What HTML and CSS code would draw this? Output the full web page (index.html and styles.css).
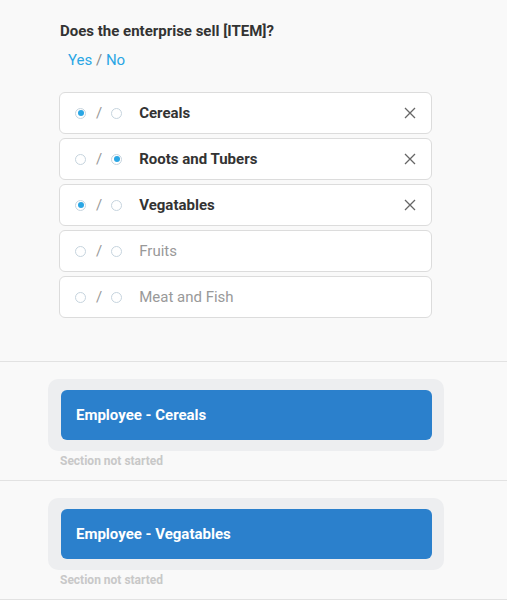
FILE: index.html
```html
<!DOCTYPE html>
<html>
<head>
<meta charset="utf-8">
<link rel="stylesheet" href="styles.css">
</head>
<body>
<div class="question">
  <div class="q-title">Does the enterprise sell [ITEM]?</div>
  <div class="q-legend"><span>Yes</span> / <span>No</span></div>
  <div class="rows">
    <div class="row">
      <span class="radio on"></span><span class="slash">/</span><span class="radio"></span>
      <span class="label sel">Cereals</span>
      <svg class="x" viewBox="0 0 12 12" width="12" height="12"><path d="M1 1L11 11M11 1L1 11" stroke="#666" stroke-width="1.3" fill="none"/></svg>
    </div>
    <div class="row">
      <span class="radio"></span><span class="slash">/</span><span class="radio on"></span>
      <span class="label sel">Roots and Tubers</span>
      <svg class="x" viewBox="0 0 12 12" width="12" height="12"><path d="M1 1L11 11M11 1L1 11" stroke="#666" stroke-width="1.3" fill="none"/></svg>
    </div>
    <div class="row">
      <span class="radio on"></span><span class="slash">/</span><span class="radio"></span>
      <span class="label sel">Vegatables</span>
      <svg class="x" viewBox="0 0 12 12" width="12" height="12"><path d="M1 1L11 11M11 1L1 11" stroke="#666" stroke-width="1.3" fill="none"/></svg>
    </div>
    <div class="row">
      <span class="radio"></span><span class="slash">/</span><span class="radio"></span>
      <span class="label">Fruits</span>
    </div>
    <div class="row">
      <span class="radio"></span><span class="slash">/</span><span class="radio"></span>
      <span class="label">Meat and Fish</span>
    </div>
  </div>
</div>
<div class="section">
  <div class="card"><div class="btn">Employee - Cereals</div></div>
  <div class="status">Section not started</div>
</div>
<div class="section">
  <div class="card"><div class="btn">Employee - Vegatables</div></div>
  <div class="status">Section not started</div>
</div>
</body>
</html>
```
FILE: styles.css
```css
html, body {
  margin: 0;
  padding: 0;
  background: #f9f9f9;
  font-family: Roboto, "Liberation Sans", sans-serif;
}
.question {
  padding: 20px 75px 43px 59px;
  border-bottom: 1px solid #e2e2e2;
}
.q-title {
  font-size: 15px;
  font-weight: bold;
  color: #333;
  line-height: 22px;
  padding-left: 1px;
}
.q-legend {
  margin-top: 7px;
  padding-left: 9px;
  font-size: 15px;
  line-height: 22px;
  color: #888;
}
.q-legend span {
  color: #2aa6e4;
}
.rows {
  margin-top: 21px;
  display: flex;
  flex-direction: column;
  gap: 4px;
}
.row {
  height: 40px;
  background: #fff;
  border: 1px solid #dcdcdc;
  border-radius: 6px;
  display: flex;
  align-items: center;
  padding-left: 15px;
  padding-right: 14px;
}
.radio {
  width: 9px;
  height: 9px;
  border: 1px solid #c6d4de;
  border-radius: 50%;
  position: relative;
  flex: none;
}
.radio.on::after {
  content: "";
  position: absolute;
  left: 1.5px;
  top: 1.5px;
  width: 6px;
  height: 6px;
  border-radius: 50%;
  background: #2aa6e4;
}
.slash {
  font-size: 15px;
  color: #999;
  margin: 0 9px 0 10px;
}
.label {
  margin-left: 17px;
  font-size: 15px;
  color: #999;
  flex: 1;
}
.label.sel {
  font-weight: bold;
  color: #333;
}
.x {
  flex: none;
  margin-right: 1px;
}
.section {
  padding: 17px 63px 11px 48px;
  border-bottom: 1px solid #e2e2e2;
}
.card {
  background: #edeef0;
  border-radius: 10px;
  padding: 11px 12px 11px 13px;
}
.btn {
  background: #2b80cc;
  border-radius: 6px;
  height: 50px;
  display: flex;
  align-items: center;
  padding-left: 15px;
  color: #fff;
  font-size: 15px;
  font-weight: bold;
}
.status {
  margin-top: 3px;
  padding-left: 12px;
  font-size: 12px;
  font-weight: bold;
  color: #c8c8c8;
  line-height: 15px;
}
```
